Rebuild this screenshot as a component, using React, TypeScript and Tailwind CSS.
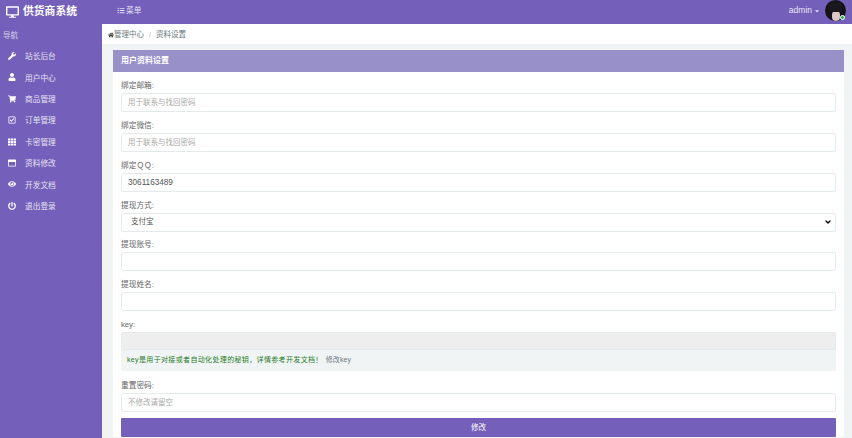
import { FaDesktop, FaWrench, FaUser, FaShoppingCart, FaRegCheckSquare, FaTh, FaRegWindowMaximize, FaEye, FaPowerOff, FaHome, FaListUl, FaCaretDown } from "react-icons/fa";
import { ChevronDown } from "lucide-react";

const navItems = [
  { label: "站长后台", icon: FaWrench },
  { label: "用户中心", icon: FaUser },
  { label: "商品管理", icon: FaShoppingCart },
  { label: "订单管理", icon: FaRegCheckSquare },
  { label: "卡密管理", icon: FaTh },
  { label: "资料修改", icon: FaRegWindowMaximize },
  { label: "开发文档", icon: FaEye },
  { label: "退出登录", icon: FaPowerOff },
];

const Field = ({ label, placeholder, value }: { label: string; placeholder?: string; value?: string }) => (
  <div className="mb-[6.85px]">
    <label className="block h-[14px] text-[7.7px] leading-[14px] text-[#666]">{label}</label>
    <input
      readOnly
      value={value}
      placeholder={placeholder}
      className="block w-full h-[19px] px-[6px] rounded-[2px] border border-[#e4eaec] bg-white text-[8.2px] text-[#555] placeholder:text-[7.5px] placeholder:text-[#a9a9a9] outline-none"
    />
  </div>
);

const App = () => {
  return (
    <div className="flex flex-col w-[852px] h-[438px] overflow-hidden bg-[#f1f4f5] text-[8px] font-['Liberation_Sans','Noto_Sans_CJK_SC',sans-serif]">
      <header className="flex items-center shrink-0 h-[24px] bg-[#7460ba] text-white">
        <div className="flex items-center w-[102px] pl-[6px] -mt-[1px]">
          <FaDesktop className="w-[13px] h-[12px] mr-[4px]" />
          <span className="text-[10.8px] font-bold whitespace-nowrap">供货商系统</span>
        </div>
        <div className="flex items-center ml-[15px] -mt-[3px] text-[7.7px] text-[#e6e2f3]">
          <FaListUl className="w-[8px] h-[7px] mr-[1px]" />
          菜单
        </div>
        <div className="flex items-center ml-auto mr-[6px]">
          <span className="text-[8.5px] -mt-[3px] text-[#e8e4f4]">admin</span>
          <FaCaretDown className="w-[6px] h-[6px] -mt-[3px] ml-[2px] mr-[5px] text-[#e8e4f4]" />
          <div className="relative w-[21px] h-[21px] -mt-[3px] rounded-full bg-[#15131a] overflow-hidden">
            <div className="absolute left-[7px] top-[11px] w-[8px] h-[10px] rounded-[4px] bg-[#dcc8c6]" />
            <div className="absolute left-[3px] top-[2px] w-[15px] h-[10px] rounded-[5px] bg-[#1a171d]" />
          </div>
          <span className="absolute right-[7px] top-[15px] w-[5px] h-[5px] rounded-full bg-[#27b24a] border border-white" />
        </div>
      </header>
      <div className="flex flex-1 min-h-0">
        <aside className="w-[102px] shrink-0 bg-[#7460ba] text-[#e6e2f3]">
          <div className="pl-[3px] pt-[5px] h-[22.4px] text-[7.5px] leading-[14px] text-[#d5cfe9]">导航</div>
          <ul>
            {navItems.map((item) => (
              <li key={item.label} className="flex items-center h-[21.4px] pl-[7px] text-[7.7px]">
                <span className="flex justify-center w-[9px] mr-[9px] -mt-[2px]">
                  <item.icon className="w-[8px] h-[8px] text-white" />
                </span>
                {item.label}
              </li>
            ))}
          </ul>
        </aside>
        <main className="flex-1 min-w-0">
          <div className="flex items-center h-[20px] pl-[6px] pt-[2px] bg-white text-[7.5px] text-[#6b7780]">
            <FaHome className="w-[6px] h-[6px] text-[#444]" />
            管理中心
            <span className="mx-[5px] text-[#b5bcc2]">/</span>
            资料设置
          </div>
          <section className="mt-[6px] ml-[11px] mr-[8px] bg-white">
            <h3 className="flex items-center h-[22px] pl-[8px] bg-[#9890c9] text-[8px] font-bold text-white">用户资料设置</h3>
            <div className="px-[8px] pt-[7px]">
              <Field label="绑定邮箱:" placeholder="用于联系与找回密码" />
              <Field label="绑定微信:" placeholder="用于联系与找回密码" />
              <Field label="绑定ＱＱ:" value="3061163489" />
              <div className="mb-[6.85px]">
                <label className="block h-[14px] text-[7.7px] leading-[14px] text-[#666]">提现方式:</label>
                <div className="flex items-center justify-between h-[19px] pl-[9px] pr-[3px] rounded-[2px] border border-[#e4eaec] text-[7.5px] text-[#555]">
                  支付宝
                  <ChevronDown className="w-[8px] h-[8px] text-black" strokeWidth={4} />
                </div>
              </div>
              <Field label="提现账号:" />
              <Field label="提现姓名:" />
              <div className="mb-[7.5px]">
                <label className="block h-[14px] text-[7.7px] leading-[14px] text-[#666]">key:</label>
                <div className="h-[18px] rounded-t-[2px] border border-[#e4eaec] bg-[#eeeeee]" />
                <div className="flex items-center h-[21px] pl-[6px] rounded-b-[2px] bg-[#f1f4f5] text-[7px]">
                  <span className="tracking-[0.35px] text-[#1f7a1f]">key是用于对接或者自动化处理的秘钥，详情参考开发文档！</span>
                  <span className="ml-[3px] tracking-[0.1px] text-[#6b7780]">修改key</span>
                </div>
              </div>
              <Field label="重置密码:" placeholder="不修改请留空" />
              <div className="flex items-center justify-center h-[19px] mt-[0.5px] rounded-[1px] bg-[#7460ba] text-[7.5px] text-white">修改</div>
            </div>
          </section>
        </main>
      </div>
    </div>
  );
};

export default App;
